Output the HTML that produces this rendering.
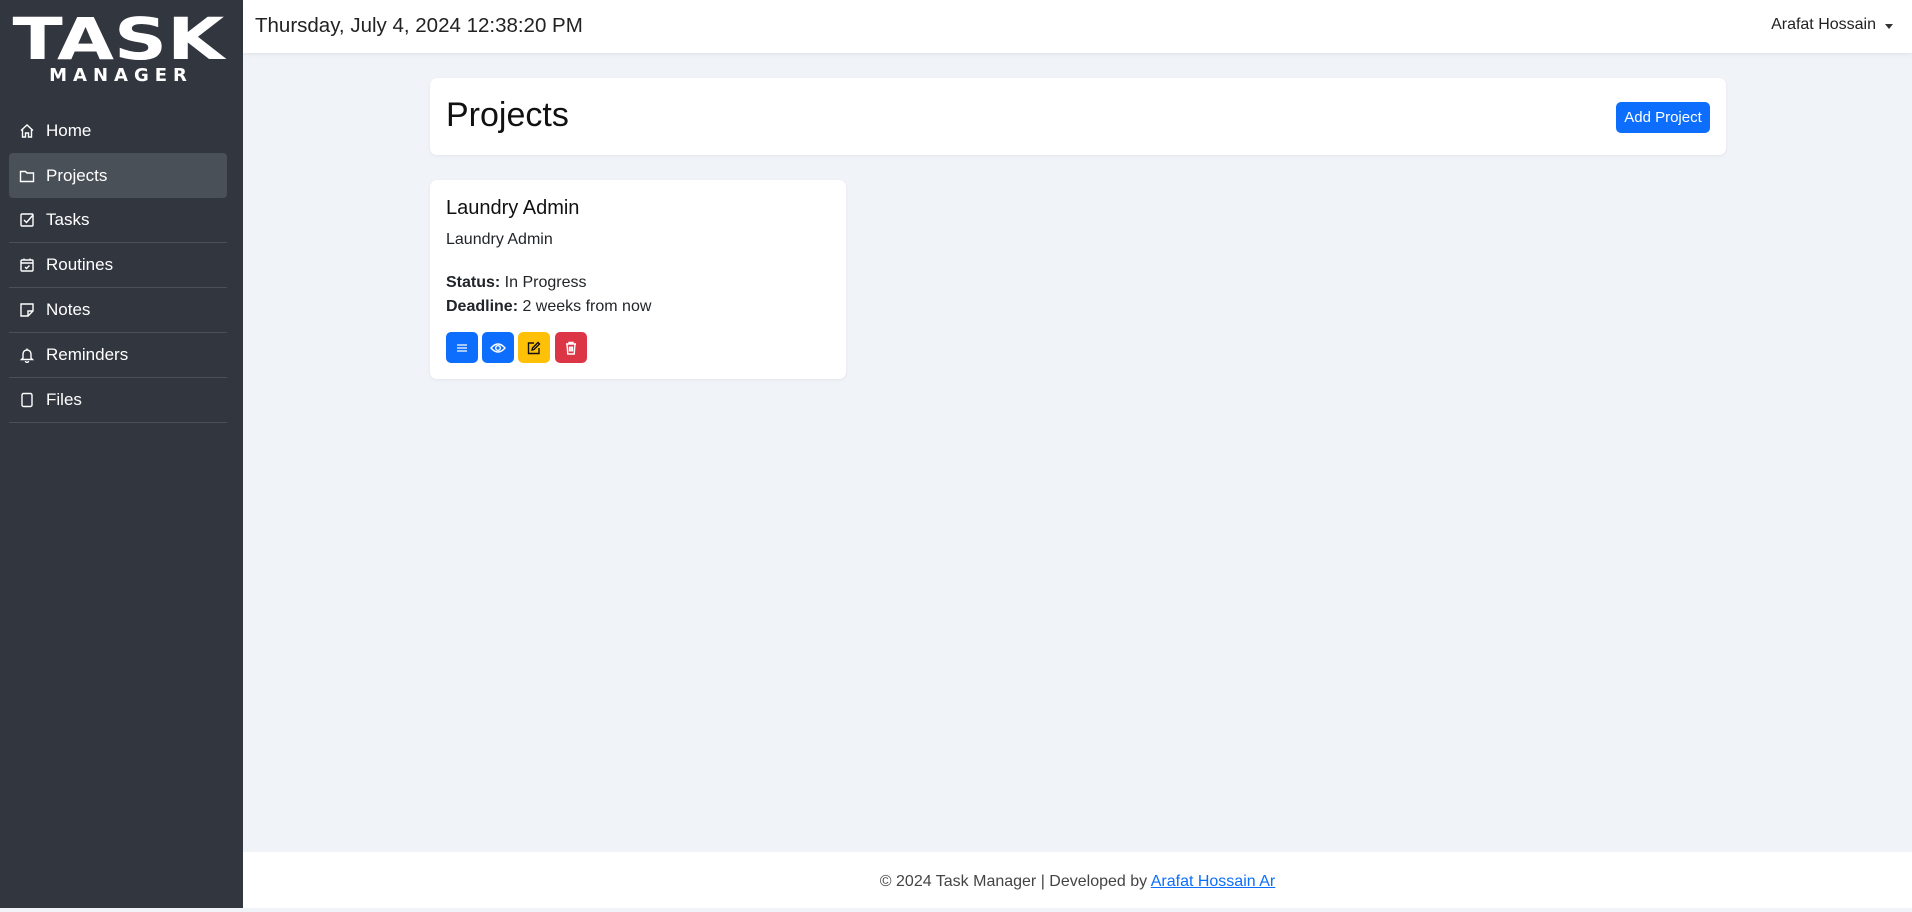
<!DOCTYPE html>
<html><head><meta charset="utf-8"><style>
*{box-sizing:border-box;margin:0;padding:0}
body{width:1912px;height:908px;overflow:hidden;font-family:"Liberation Sans",sans-serif;background:#f0f3f8;position:relative;color:#212529}
.side{position:absolute;left:0;top:0;width:243px;height:908px;background:#31363f}
.logo{position:absolute;left:4px;top:17px;width:228px;text-align:center;color:#fff;font-weight:900}
.logo .t{font-size:58px;letter-spacing:0px;line-height:44px;transform:scaleX(1.27);display:inline-block;font-family:"DejaVu Sans",sans-serif;font-weight:bold}
.logo .m{font-size:18px;letter-spacing:6px;line-height:18px;margin-top:3px;margin-left:6px;font-family:"DejaVu Sans",sans-serif;font-weight:bold}
.nav{position:absolute;left:9px;top:108px;width:218px}
.it{height:45px;display:flex;align-items:center;padding-left:10px;color:#fff;font-size:17px;border-bottom:1px solid #4b5058}
.it.first{border-bottom:none}
.it.act{background:#4a5058;border-radius:4px;border-bottom:none}
.it svg{width:16px;height:16px;margin-right:11px;fill:none;stroke:#fff;stroke-width:1.4}
.hdr{position:absolute;left:243px;top:0;right:0;height:53px;background:#fff;box-shadow:0 1px 4px rgba(0,0,0,.08)}
.date{position:absolute;left:12px;top:14px;font-size:20.5px;color:#222}
.user{position:absolute;right:36px;top:16px;font-size:16px;color:#222}
.caret{position:absolute;right:19px;top:24px;border:4px solid transparent;border-top:5px solid #333}
.card{position:absolute;background:#fff;border-radius:7px;box-shadow:0 1px 3px rgba(0,0,0,.06)}
.btn{position:absolute;border-radius:5px;display:flex;align-items:center;justify-content:center}
.foot{position:absolute;left:243px;right:0;top:852px;height:56px;background:#fff;text-align:center;line-height:60px;font-size:16px;color:#444}
.foot a{color:#0d6efd;text-decoration:underline}
</style></head><body>
<div class="side">
<div class="logo"><div class="t">TASK</div><div class="m">MANAGER</div></div>
<div class="nav">
<div class="it first"><svg viewBox="0 0 16 16"><path d="M2 7.5L8 2l6 5.5M3.5 6.5V14h3v-4h3v4h3V6.5"/></svg>Home</div>
<div class="it act"><svg viewBox="0 0 16 16"><path d="M1.5 3.5h5l1.5 1.5h6.5v8.5h-13z"/></svg>Projects</div>
<div class="it"><svg viewBox="0 0 16 16"><rect x="2" y="2" width="12" height="12" rx="1"/><path d="M5 8l2.5 2.5L14 3"/></svg>Tasks</div>
<div class="it"><svg viewBox="0 0 16 16"><rect x="2" y="3" width="12" height="11" rx="1"/><path d="M2 6h12M5 1.5v2M11 1.5v2M6 10l1.5 1.5L10.5 8.5"/></svg>Routines</div>
<div class="it"><svg viewBox="0 0 16 16"><path d="M2 2h12v7l-5 5H2zM14 9H9v5"/></svg>Notes</div>
<div class="it"><svg viewBox="0 0 16 16"><path d="M4 11V7a4 4 0 018 0v4l1.5 1.5h-11zM6.5 14a1.5 1.5 0 003 0M8 1.5V3"/></svg>Reminders</div>
<div class="it"><svg viewBox="0 0 16 16"><rect x="3" y="1.5" width="10" height="13" rx="1.5"/></svg>Files</div>
</div></div>
<div class="hdr"><div class="date">Thursday, July 4, 2024 12:38:20 PM</div><div class="user">Arafat Hossain</div><div class="caret"></div></div>
<div class="card" style="left:430px;top:78px;width:1296px;height:77px">
<div style="position:absolute;left:16px;top:18px;font-size:34px;color:#111">Projects</div>
<div class="btn" style="left:1186px;top:24px;width:94px;height:31px;background:#0d6efd;color:#fff;font-size:15px">Add Project</div>
</div>
<div class="card" style="left:430px;top:180px;width:416px;height:199px">
<div style="position:absolute;left:16px;top:17px;font-size:20px;color:#111">Laundry Admin</div>
<div style="position:absolute;left:16px;top:51px;font-size:16px">Laundry Admin</div>
<div style="position:absolute;left:16px;top:91px;font-size:16px;line-height:24px"><b>Status:</b> In Progress<br><b>Deadline:</b> 2 weeks from now</div>
<div class="btn" style="left:16px;top:152px;width:32px;height:31px;background:#0d6efd"><svg width="12" height="12" viewBox="0 0 12 12" stroke="#fff" stroke-width="1.3"><path d="M1 3h10M1 6h10M1 9h10"/></svg></div>
<div class="btn" style="left:52px;top:152px;width:32px;height:31px;background:#0d6efd"><svg width="16" height="12" viewBox="0 0 16 12" fill="none" stroke="#fff" stroke-width="1.4"><path d="M1 6q7-8 14 0q-7 8-14 0z"/><circle cx="8" cy="6" r="2.3"/></svg></div>
<div class="btn" style="left:88px;top:152px;width:32px;height:31px;background:#ffc107"><svg width="14" height="14" viewBox="0 0 14 14" fill="none" stroke="#111" stroke-width="1.4"><path d="M7 2H1.5v10.5H12V7"/><path d="M5 9l.5-2L11 1.5l1.5 1.5L7 8.5z"/></svg></div>
<div class="btn" style="left:125px;top:152px;width:32px;height:31px;background:#dc3545"><svg width="12" height="14" viewBox="0 0 12 14" fill="none" stroke="#fff" stroke-width="1.4"><path d="M1 3h10M4 3V1.5h4V3M2 3l.8 10h6.4L10 3M4.5 5.5v5M6 5.5v5M7.5 5.5v5"/></svg></div>
</div>
<div class="foot">© 2024 Task Manager | Developed by <a>Arafat Hossain Ar</a></div>
</body></html>
